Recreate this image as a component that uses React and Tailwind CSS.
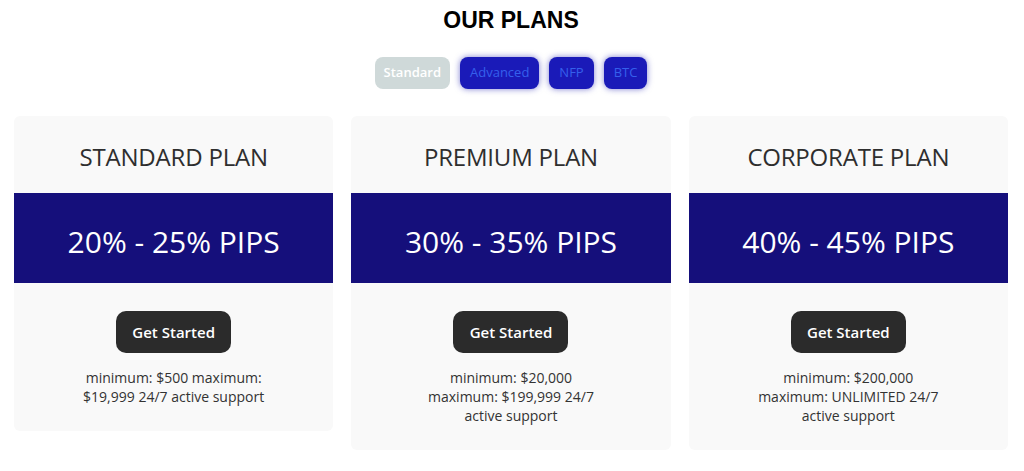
const plans = [
  {
    name: "STANDARD PLAN",
    pips: "20% - 25% PIPS",
    lines: ["minimum: $500 maximum:", "$19,999 24/7 active support"],
  },
  {
    name: "PREMIUM PLAN",
    pips: "30% - 35% PIPS",
    lines: ["minimum: $20,000", "maximum: $199,999 24/7", "active support"],
  },
  {
    name: "CORPORATE PLAN",
    pips: "40% - 45% PIPS",
    lines: ["minimum: $200,000", "maximum: UNLIMITED 24/7", "active support"],
  },
];

const tabs = ["Standard", "Advanced", "NFP", "BTC"];

function PlanCard({ plan }) {
  return (
    <div className="flex flex-col items-center rounded-md bg-[#f9f9f9] pb-[25px]">
      <div className="flex h-[77px] items-center pt-[5px]">
        <h3 className="text-[24px] tracking-[-0.2px] text-[#2e2e2e]">{plan.name}</h3>
      </div>
      <div className="flex h-[90px] w-full items-center justify-center bg-[#150f7b] pt-[7px]">
        <p className="text-[30px] font-medium text-white">{plan.pips}</p>
      </div>
      <button className="mt-[28px] h-[42px] w-[115px] rounded-[10px] bg-[#2b2b2b] text-[15px] font-semibold text-white">
        Get Started
      </button>
      <div className="mt-[15px] text-center text-[14px] font-medium leading-[19px] text-[#333]">
        {plan.lines.map((l) => (
          <p key={l}>{l}</p>
        ))}
      </div>
    </div>
  );
}

export default function App() {
  return (
    <div className="min-h-[471px] bg-white pl-[14px] pr-[16px] font-['Open_Sans',sans-serif]">
      <h2 className="pt-[7px] text-center font-['Liberation_Sans',Arial,sans-serif] text-[23px] font-bold leading-[26px] text-black">
        OUR PLANS
      </h2>
      <div className="mt-[24px] flex justify-center gap-[10px]">
        {tabs.map((t, i) =>
          i === 0 ? (
            <span key={t} className="flex h-[32px] items-center rounded-[8px] bg-[#cfd9d9] px-[9px] text-[13px] font-semibold text-white">
              {t}
            </span>
          ) : (
            <span
              key={t}
              className="flex h-[32px] items-center rounded-[8px] bg-[#1a1ab8] px-[10px] text-[13px] font-medium text-[#3560ec] shadow-[0_0_6px_rgba(20,20,170,0.55)]"
            >
              {t}
            </span>
          )
        )}
      </div>
      <div className="mt-[27px] grid grid-cols-3 items-start gap-[18px]">
        {plans.map((p) => (
          <PlanCard key={p.name} plan={p} />
        ))}
      </div>
    </div>
  );
}
